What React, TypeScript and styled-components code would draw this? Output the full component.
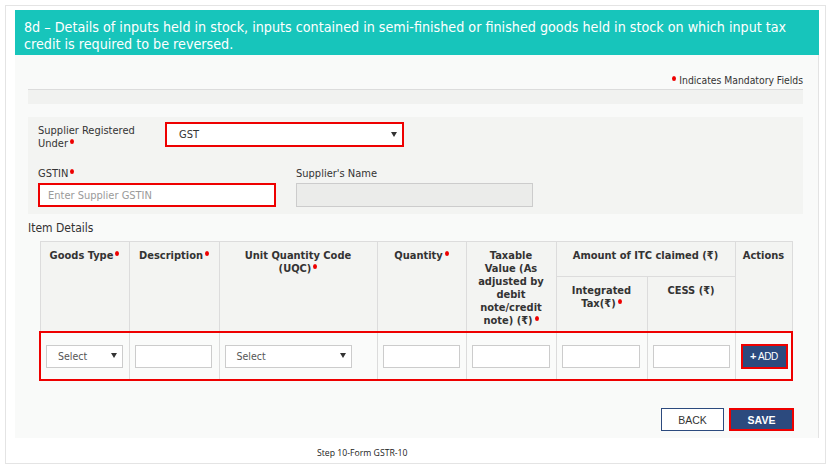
import React from 'react';
import styled, { createGlobalStyle } from 'styled-components';

const GlobalStyle = createGlobalStyle`
  body {
    margin: 0;
    background: #ffffff;
    font-family: "DejaVu Sans Condensed", "DejaVu Sans", Verdana, sans-serif;
    color: #333333;
  }
`;

export default function App() {
  return (
    <>
      <GlobalStyle />
      <Frame>
        <Panel>
          <Banner>
            8d – Details of inputs held in stock, inputs contained in semi-finished or finished goods held in stock on which input tax
            credit is required to be reversed.
          </Banner>
          <Body>
            <Mandatory>
              <Req /> Indicates Mandatory Fields
            </Mandatory>
            <GrayBar />
            <FormBox>
              <Row>
                <SideLabel>
                  Supplier Registered Under
                  <Req />
                </SideLabel>
                <SelectBox width={239} highlight>
                  GST
                  <Caret />
                </SelectBox>
              </Row>
              <Row gap={20} top={17}>
                <Field>
                  <FieldLabel>
                    GSTIN
                    <Req />
                  </FieldLabel>
                  <TextBox width={238} highlight placeholder="Enter Supplier GSTIN" />
                </Field>
                <Field>
                  <FieldLabel>Supplier's Name</FieldLabel>
                  <TextBox width={237} disabled />
                </Field>
              </Row>
            </FormBox>
            <SectionTitle>Item Details</SectionTitle>
            <Table>
              <colgroup>
                <col style={{ width: 89 }} />
                <col style={{ width: 90 }} />
                <col style={{ width: 158 }} />
                <col style={{ width: 89 }} />
                <col style={{ width: 90 }} />
                <col style={{ width: 91 }} />
                <col style={{ width: 88 }} />
                <col style={{ width: 57 }} />
              </colgroup>
              <thead>
                <tr>
                  <Th rowSpan={2}>
                    Goods Type
                    <Req />
                  </Th>
                  <Th rowSpan={2}>
                    Description
                    <Req />
                  </Th>
                  <Th rowSpan={2}>
                    Unit Quantity Code{' '}
                    <NoWrap>
                      (UQC)
                      <Req />
                    </NoWrap>
                  </Th>
                  <Th rowSpan={2}>
                    Quantity
                    <Req />
                  </Th>
                  <Th rowSpan={2}>
                    Taxable Value (As adjusted by debit note/credit{' '}
                    <NoWrap>
                      note) (₹)
                      <Req />
                    </NoWrap>
                  </Th>
                  <Th colSpan={2} height={35}>
                    Amount of ITC claimed (₹)
                  </Th>
                  <Th rowSpan={2}>Actions</Th>
                </tr>
                <tr>
                  <Th height={55}>
                    Integrated{' '}
                    <NoWrap>
                      Tax(₹)
                      <Req />
                    </NoWrap>
                  </Th>
                  <Th height={55}>CESS (₹)</Th>
                </tr>
              </thead>
              <tbody>
                <tr>
                  <Td first>
                    <SelectBox width={77} small>
                      Select
                      <Caret />
                    </SelectBox>
                  </Td>
                  <Td>
                    <TextBox width={77} small />
                  </Td>
                  <Td>
                    <SelectBox width={127} small>
                      Select
                      <Caret />
                    </SelectBox>
                  </Td>
                  <Td>
                    <TextBox width={77} small />
                  </Td>
                  <Td>
                    <TextBox width={78} small />
                  </Td>
                  <Td>
                    <TextBox width={78} small />
                  </Td>
                  <Td>
                    <TextBox width={77} small />
                  </Td>
                  <Td last>
                    <AddButton>
                      <b>+</b> ADD
                    </AddButton>
                  </Td>
                </tr>
              </tbody>
            </Table>
            <Actions>
              <BackButton>BACK</BackButton>
              <SaveButton>SAVE</SaveButton>
            </Actions>
          </Body>
        </Panel>
        <Caption>Step 10-Form GSTR-10</Caption>
      </Frame>
    </>
  );
}

const Frame = styled.div`
  margin: 5px 0 0 5px;
  width: 821px;
  height: 459px;
  box-sizing: border-box;
  border: 1px solid #e4e4e4;
  padding: 4px 6px 0 9px;
`;

const Panel = styled.div`
  width: 804px;
`;

const Banner = styled.div`
  background: #17c5bb;
  color: #ffffff;
  font-size: 14.2px;
  line-height: 17px;
  height: 45px;
  box-sizing: border-box;
  padding: 9px 9px 0 9px;
  overflow: hidden;
`;

const Body = styled.div`
  background: #f9faf9;
  border-right: 1px solid #e3e3e3;
  padding: 0 15px 7px 13px;
`;

const Mandatory = styled.div`
  font-size: 10.3px;
  line-height: 12px;
  padding-top: 19px;
  margin-bottom: 3px;
  text-align: right;
  color: #333;
`;

const Req = styled.span`
  display: inline-block;
  width: 4px;
  height: 5px;
  border-radius: 50%;
  background: #ee0000;
  vertical-align: top;
  margin: 2px 0 0 2px;
`;

const NoWrap = styled.span`
  white-space: nowrap;
`;

const GrayBar = styled.div`
  height: 14px;
  border-top: 1px solid #dcdcdc;
  background: #f1f2f0;
  margin-bottom: 13px;
`;

const FormBox = styled.div`
  background: #f3f4f2;
  padding: 5px 11px 7px 10px;
`;

const Row = styled.div<{ gap?: number; top?: number }>`
  display: flex;
  align-items: flex-start;
  gap: ${(p) => p.gap ?? 0}px;
  margin-top: ${(p) => p.top ?? 0}px;
`;

const SideLabel = styled.div`
  width: 102px;
  margin-right: 25px;
  padding-top: 2px;
  font-size: 11px;
  line-height: 13px;
`;

const Field = styled.div`
  display: flex;
  flex-direction: column;
  gap: 3px;
`;

const FieldLabel = styled.div`
  font-size: 11px;
  line-height: 13px;
`;

const SelectBox = styled.div<{ width: number; highlight?: boolean; small?: boolean }>`
  position: relative;
  box-sizing: border-box;
  width: ${(p) => p.width}px;
  height: ${(p) => (p.small ? 23 : 25)}px;
  border: ${(p) => (p.highlight ? '2px solid #ee0000' : '1px solid #cccccc')};
  background: #ffffff;
  padding-left: ${(p) => (p.small ? 11 : 12)}px;
  font-size: ${(p) => (p.small ? 10.5 : 11)}px;
  line-height: 21px;
  color: ${(p) => (p.small ? '#555' : '#333')};
`;

const Caret = styled.span`
  position: absolute;
  right: 5px;
  top: 50%;
  margin-top: -3px;
  width: 0;
  height: 0;
  border-left: 3px solid transparent;
  border-right: 3px solid transparent;
  border-top: 5px solid #333;
`;

const TextBox = styled.input<{ width: number; highlight?: boolean; small?: boolean }>`
  display: block;
  box-sizing: border-box;
  width: ${(p) => p.width}px;
  height: ${(p) => (p.small ? 23 : 24)}px;
  margin: 0;
  border: ${(p) => (p.highlight ? '2px solid #ee0000' : '1px solid #cccccc')};
  background: ${(p) => (p.disabled ? '#ebecea' : '#ffffff')};
  padding: 0 8px;
  font-family: inherit;
  font-size: 11px;
  outline: none;
  &::placeholder {
    color: #9a9a9a;
  }
`;

const SectionTitle = styled.div`
  margin-top: 7px;
  font-size: 12px;
  line-height: 14px;
  color: #333;
`;

const Table = styled.table`
  margin: 6px 0 0 11px;
  width: 752px;
  border-collapse: collapse;
  table-layout: fixed;
`;

const Th = styled.th<{ height?: number }>`
  background: #f3f4f2;
  border: 1px solid #dcdcdc;
  vertical-align: top;
  text-align: center;
  font-size: 11px;
  line-height: 13px;
  font-weight: bold;
  color: #333;
  padding: 7px 7px 0 7px;
  height: ${(p) => (p.height ? `${p.height - 8}px` : 'auto')};
`;

const Td = styled.td<{ first?: boolean; last?: boolean }>`
  background: #fafbfa;
  height: 46px;
  padding: 0 5px;
  vertical-align: middle;
  border-top: 2px solid #ee0000;
  border-bottom: 2px solid #ee0000;
  border-left: ${(p) => (p.first ? '2px solid #ee0000' : '1px solid #dcdcdc')};
  border-right: ${(p) => (p.last ? '2px solid #ee0000' : '1px solid #dcdcdc')};
`;

const AddButton = styled.button`
  width: 47px;
  height: 25px;
  box-sizing: border-box;
  border: 2px solid #ee0000;
  background: #2c4a7e;
  color: #ffffff;
  font-family: "Liberation Sans", Arial, sans-serif;
  font-size: 10px;
  padding: 0;
  letter-spacing: -0.4px;
  b {
    font-size: 11px;
  }
`;

const Actions = styled.div`
  display: flex;
  justify-content: flex-end;
  gap: 5px;
  margin: 27px 9px 0 0;
`;

const BackButton = styled.button`
  width: 63px;
  height: 23px;
  box-sizing: border-box;
  border: 1px solid #2c4a7e;
  background: #ffffff;
  color: #333;
  font-family: "Liberation Sans", Arial, sans-serif;
  font-size: 10.5px;
  padding: 0;
`;

const SaveButton = styled(BackButton)`
  width: 65px;
  border: 2px solid #ee0000;
  background: #2c4a7e;
  color: #ffffff;
  font-weight: bold;
`;

const Caption = styled.div`
  padding: 9px 0 0 302px;
  font-family: "Open Sans", "Noto Sans", sans-serif;
  font-size: 8.7px;
  color: #222;
`;
